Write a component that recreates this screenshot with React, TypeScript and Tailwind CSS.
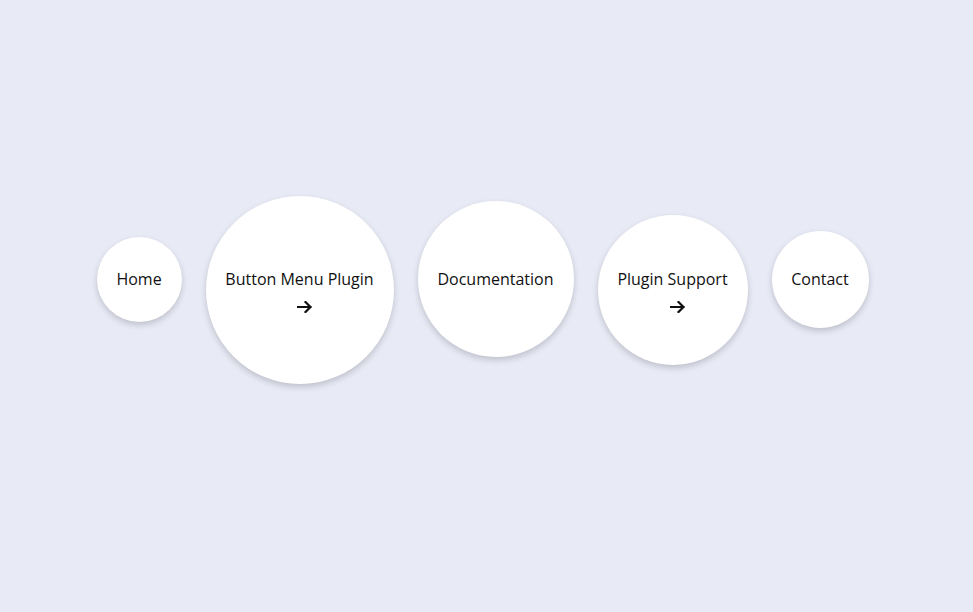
import React from 'react';

type Item = {
    label: string;
    size: string;
    arrow?: boolean;
};

const items: Item[] = [
    { label: 'Home', size: 'w-[85px] h-[85px]' },
    { label: 'Button Menu Plugin', size: 'w-[188px] h-[188px]', arrow: true },
    { label: 'Documentation', size: 'w-[156px] h-[156px]' },
    { label: 'Plugin Support', size: 'w-[150px] h-[150px]', arrow: true },
    { label: 'Contact', size: 'w-[97px] h-[97px]' },
];

function Arrow() {
    return (
        <svg width="15" height="12" viewBox="0 0 15 12" fill="none" className="ml-[10px] mt-2.5">
            <path d="M1 6h12.5M8.5 1l5 5-5 5" stroke="#111" strokeWidth="2.2" strokeLinecap="square" />
        </svg>
    );
}

function App() {
    return (
        <div
            className="w-full h-screen bg-[#e8eaf6] flex items-center justify-center pb-8 pr-2"
            style={{ fontFamily: '"Open Sans", "Liberation Sans", sans-serif' }}
        >
            <nav className="flex items-baseline gap-6">
                {items.map((item) => (
                    <a
                        key={item.label}
                        href="#"
                        className={`${item.size} shrink-0 rounded-full bg-white shadow-[0_3px_6px_rgba(0,0,0,0.18)] flex flex-col items-center justify-center text-[16px] leading-6 text-[#111] whitespace-nowrap`}
                    >
                        <span>{item.label}</span>
                        {item.arrow && <Arrow />}
                    </a>
                ))}
            </nav>
        </div>
    );
}

export default App;
